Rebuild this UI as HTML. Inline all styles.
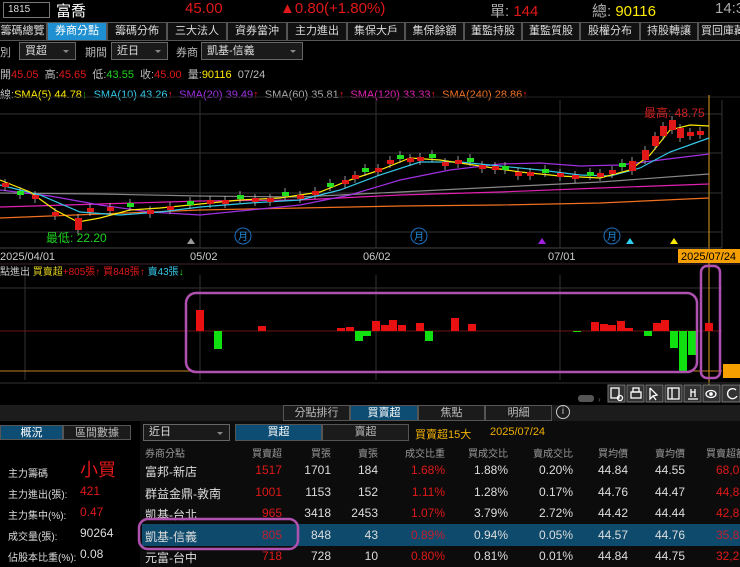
<!DOCTYPE html>
<html><head><meta charset="utf-8">
<style>
*{margin:0;padding:0;box-sizing:border-box}
body{width:740px;height:567px;overflow:hidden;background:#000;font-family:"Liberation Sans","Noto Sans CJK TC",sans-serif;color:#ddd;position:relative;font-size:11px}
.a{position:absolute;white-space:nowrap}
.tab{position:absolute;top:22px;height:19px;border:1px solid #555;background:#111;color:#ddd;font-size:11px;text-align:center;line-height:17px}
.tab.on{background:#1e8fd0;color:#fff}
.sel{position:absolute;height:18px;border:1px solid #666;background:#1a1a1a;color:#ddd;font-size:11px;line-height:16px;padding-left:5px}
.sel:after{content:"";position:absolute;right:6px;top:7px;border:3px solid transparent;border-top-color:#888}
.btab{position:absolute;height:16px;border:1px solid #555;background:#1b1b1b;color:#bbb;font-size:11px;text-align:center;line-height:14px}
.btab.on{background:#0e4d73;color:#fff}
.r{position:absolute;text-align:right;font-size:12px}
.red{color:#e01818}.wh{color:#ddd}
</style></head><body>
<!-- top bar -->
<div class="a" style="left:3px;top:2px;width:47px;height:16px;border:1px solid #777;font-size:10px;line-height:14px;padding-left:4px">1815</div>
<div class="a" style="left:56px;top:0;font-size:15px;color:#fff">富喬</div>
<div class="a" style="left:185px;top:0;font-size:15px;color:#e01818">45.00</div>
<div class="a" style="left:280px;top:0;font-size:15px;color:#e01818">▲0.80(+1.80%)</div>
<div class="a" style="left:490px;top:0;font-size:15px;color:#aaa">單: <span class="red">144</span></div>
<div class="a" style="left:592px;top:0;font-size:15px;color:#aaa">總: <span style="color:#ffea00">90116</span></div>
<div class="a" style="left:715px;top:0;font-size:15px;color:#aaa">14:3</div>
<!-- tabs -->
<div class="tab" style="left:-2px;width:49px">籌碼總覽</div>
<div class="tab on" style="left:47px;width:60px">券商分點</div>
<div class="tab" style="left:107px;width:60px">籌碼分佈</div>
<div class="tab" style="left:167px;width:60px">三大法人</div>
<div class="tab" style="left:227px;width:60px">資券當沖</div>
<div class="tab" style="left:287px;width:60px">主力進出</div>
<div class="tab" style="left:347px;width:58px">集保大戶</div>
<div class="tab" style="left:405px;width:59px">集保餘額</div>
<div class="tab" style="left:464px;width:58px">董監持股</div>
<div class="tab" style="left:522px;width:58px">董監質股</div>
<div class="tab" style="left:580px;width:60px">股權分布</div>
<div class="tab" style="left:640px;width:58px">持股轉讓</div>
<div class="tab" style="left:698px;width:50px">買回庫藏</div>
<!-- selectors -->
<div class="a" style="left:0;top:44px;color:#bbb">別</div>
<div class="sel" style="left:19px;top:42px;width:57px">買超</div>
<div class="a" style="left:85px;top:44px;color:#bbb">期間</div>
<div class="sel" style="left:111px;top:42px;width:57px">近日</div>
<div class="a" style="left:176px;top:44px;color:#bbb">券商</div>
<div class="sel" style="left:201px;top:42px;width:102px">凱基-信義</div>
<div class="a" style="left:0;top:66px;font-size:11px;color:#bbb">開<span class="red">45.05</span> &nbsp;高:<span class="red">45.65</span> &nbsp;低:<span style="color:#1ed41e">43.55</span> &nbsp;收:<span class="red">45.00</span> &nbsp;量:<span style="color:#ffea00">90116</span> &nbsp;07/24</div>
<div class="a" style="left:0;top:86px;font-size:11px;color:#bbb">線:<span style="color:#ffea00">SMA(5) 44.78</span><span style="color:#1ed41e">↓</span> &nbsp;<span style="color:#34c8e8">SMA(10) 43.26</span><span class="red">↑</span> &nbsp;<span style="color:#a030e0">SMA(20) 39.49</span><span class="red">↑</span> &nbsp;<span style="color:#aaa">SMA(60) 35.81</span><span class="red">↑</span> &nbsp;<span style="color:#e020b0">SMA(120) 33.33</span><span class="red">↑</span> &nbsp;<span style="color:#f07020">SMA(240) 28.86</span><span class="red">↑</span></div>
<svg class="a" style="left:0;top:0" width="740" height="410" id="ch">
<g stroke="#333" stroke-width="1">
<line x1="0" y1="114" x2="722" y2="114"/><line x1="0" y1="153" x2="722" y2="153"/><line x1="0" y1="193" x2="722" y2="193"/><line x1="0" y1="232" x2="722" y2="232"/>
<line x1="200" y1="100" x2="200" y2="248"/><line x1="376" y1="100" x2="376" y2="248"/><line x1="560" y1="100" x2="560" y2="248"/><line x1="722" y1="100" x2="722" y2="248"/>
<line x1="25" y1="275" x2="25" y2="380"/><line x1="200" y1="275" x2="200" y2="380"/><line x1="376" y1="275" x2="376" y2="380"/><line x1="560" y1="275" x2="560" y2="380"/>
<line x1="0" y1="288" x2="722" y2="288"/>
</g>
<line x1="0" y1="97" x2="740" y2="97" stroke="#222"/>
<line x1="0" y1="264" x2="740" y2="264" stroke="#402030"/>
<line x1="709" y1="95" x2="709" y2="385" stroke="#e0a020"/>
<g fill="none" stroke-width="1.2">
<polyline stroke="#f07020" points="0,218 100,214 200,210 300,208 400,206 500,205 600,203 709,198"/>
<polyline stroke="#e020b0" points="0,207 100,204 200,201 300,200 400,195 500,192 600,188 709,184"/>
<polyline stroke="#888" points="0,193 100,194 200,196 300,197 400,192 500,187 600,182 709,174"/>
<polyline stroke="#a030e0" points="0,190 50,196 100,205 150,212 200,215 250,210 300,205 350,195 400,180 450,170 500,164 540,163 580,166 620,165 660,160 709,154"/>
<polyline stroke="#34c8e8" points="0,185 40,195 80,212 120,215 160,212 200,207 250,203 300,200 340,190 380,175 420,162 460,162 500,166 540,170 580,175 610,176 640,168 670,152 709,138"/>
<polyline stroke="#ffea00" points="0,180 30,192 55,210 78,222 100,218 130,210 160,208 200,204 240,200 280,198 320,192 350,180 380,170 410,158 440,160 480,166 520,172 560,176 600,178 630,170 650,155 670,130 690,125 709,126"/>
</g>
<g id="cand"></g>
<text x="644" y="117" fill="#d02020" font-size="12">最高: 48.75</text>
<text x="46" y="242" fill="#1ed41e" font-size="12">最低: 22.20</text>
<g fill="none" stroke="#1e6fc0"><circle cx="243" cy="236" r="8"/><circle cx="419" cy="236" r="8"/><circle cx="612" cy="236" r="8"/></g>
<g fill="#1e8fe0" font-size="10"><text x="238" y="240">月</text><text x="414" y="240">月</text><text x="607" y="240">月</text></g>
<polygon points="187,244 191,238 195,244" fill="#999"/>
<polygon points="538,244 542,238 546,244" fill="#a020e0"/>
<polygon points="626,244 630,238 634,244" fill="#30d0f0"/>
<polygon points="670,244 674,238 678,244" fill="#ffea00"/>
<line x1="0" y1="248" x2="722" y2="248" stroke="#444"/>
<g fill="#ccc" font-size="11"><text x="0" y="260">2025/04/01</text><text x="190" y="260">05/02</text><text x="363" y="260">06/02</text><text x="548" y="260">07/01</text></g>
<rect x="678" y="249" width="62" height="14" fill="#f5a000"/>
<text x="681" y="260" fill="#000" font-size="11">2025/07/24</text>
<text x="0" y="275" font-size="10" fill="#ccc">點進出 <tspan fill="#e0d020">買賣超</tspan><tspan fill="#e01818">+805張↑ 買848張↑</tspan> <tspan fill="#34c8e8">賣43張</tspan><tspan fill="#1ed41e">↓</tspan></text>
<line x1="0" y1="331" x2="722" y2="331" stroke="#6a1515"/>
<line x1="0" y1="371" x2="190" y2="371" stroke="#c08020"/>
<line x1="690" y1="371" x2="722" y2="371" stroke="#c08020"/>
<g id="bars"></g>
<rect x="186" y="293" width="511" height="79" rx="10" fill="none" stroke="#b050b0" stroke-width="2.5"/>
<rect x="701" y="266" width="19" height="112" rx="6" fill="none" stroke="#b050b0" stroke-width="2.5"/>
<rect x="723" y="364" width="17" height="14" fill="#f5a000"/>
<line x1="0" y1="383" x2="740" y2="383" stroke="#333"/>
<rect x="578" y="395" width="16" height="7" rx="3" fill="#555"/>
<text x="598" y="402" fill="#666" font-size="8">›</text>
<g fill="#333" stroke="#777"><rect x="608" y="385" width="17" height="17"/><rect x="627" y="385" width="17" height="17"/><rect x="646" y="385" width="17" height="17"/><rect x="665" y="385" width="17" height="17"/><rect x="684" y="385" width="17" height="17"/><rect x="703" y="385" width="17" height="17"/><rect x="722" y="385" width="18" height="17"/></g>
<g stroke="#fff" fill="none" stroke-width="1.3">
<rect x="611" y="388" width="8" height="10"/><circle cx="620" cy="398" r="2.5"/>
<rect x="631" y="392" width="10" height="6"/><rect x="633" y="388" width="6" height="4"/>
<path d="M650 388 L650 399 L653 396 L656 400 M650 388 L657 395 L653 396"/>
<rect x="668" y="388" width="11" height="11"/><line x1="672" y1="388" x2="672" y2="399"/>
<path d="M688 399 H698 M691 389 V397 M695 389 V397 M691 392 H695"/>
<ellipse cx="711" cy="394" rx="5" ry="3.5"/><circle cx="711" cy="394" r="1.2" fill="#fff"/>
<path d="M736 390 A5 5 0 1 0 737 396"/>
</g>
</svg>
<!-- bottom panel -->
<div class="a" style="left:0;top:405px;width:740px;height:162px;background:#0c0c0c"></div>
<div class="a" style="left:0;top:405px;width:740px;height:16px;background:#1c1c1c"></div>
<div class="btab" style="left:283px;top:405px;width:67px">分點排行</div>
<div class="btab on" style="left:350px;top:405px;width:68px">買賣超</div>
<div class="btab" style="left:418px;top:405px;width:67px">焦點</div>
<div class="btab" style="left:485px;top:405px;width:67px">明細</div>
<div class="a" style="left:556px;top:405px;width:14px;height:14px;border:1px solid #ccc;border-radius:50%;font-size:10px;text-align:center;line-height:12px;color:#ccc">i</div>
<div class="a" style="left:0;top:421px;width:140px;height:146px;background:#000"></div>
<div class="btab on" style="left:0;top:425px;width:63px;height:15px">概況</div>
<div class="btab" style="left:63px;top:425px;width:68px;height:15px">區間數據</div>
<div class="sel" style="left:143px;top:424px;width:87px;height:17px;line-height:15px">近日</div>
<div class="btab on" style="left:235px;top:424px;width:87px;height:17px">買超</div>
<div class="btab" style="left:322px;top:424px;width:87px;height:17px">賣超</div>
<div class="a" style="left:415px;top:426px;color:#f0b000">買賣超15大</div>
<div class="a" style="left:490px;top:426px;color:#f0b000">2025/07/24</div>
<div class="a" style="left:8px;top:465px;font-size:10px">主力籌碼</div>
<div class="a" style="left:80px;top:456px;font-size:18px;color:#e01818">小買</div>
<div class="a" style="left:8px;top:486px;font-size:10px">主力進出(張):</div><div class="a red" style="left:80px;top:484px;font-size:12px">421</div>
<div class="a" style="left:8px;top:507px;font-size:10px">主力集中(%):</div><div class="a red" style="left:80px;top:505px;font-size:12px">0.47</div>
<div class="a" style="left:8px;top:528px;font-size:10px">成交量(張):</div><div class="a" style="left:80px;top:526px;font-size:12px">90264</div>
<div class="a" style="left:8px;top:549px;font-size:10px">佔股本比重(%):</div><div class="a" style="left:80px;top:547px;font-size:12px">0.08</div>
<div class="a" style="left:142px;top:524px;width:598px;height:22px;background:#0d4a6c"></div>
<div id="tbl"></div>
<svg class="a" style="left:0;top:0" width="740" height="567"><rect x="139" y="519" width="159" height="30" rx="9" fill="none" stroke="#b050b0" stroke-width="2.5"/></svg>
<script>
var ns="http://www.w3.org/2000/svg";
function el(p,t,a){var e=document.createElementNS(ns,t);for(var k in a)e.setAttribute(k,a[k]);p.appendChild(e);return e;}
var pts=[[5,183],[20,195],[35,195],[55,212],[78,230],[90,208],[110,207],[130,207],[150,210],[170,206],[190,205],[210,200],[225,200],[240,199],[255,198],[270,198],[285,196],[300,195],[315,191],[330,187],[345,180],[355,175],[365,172],[378,168],[390,160],[400,159],[410,158],[420,157],[432,158],[445,162],[458,160],[470,162],[482,165],[495,166],[505,170],[518,172],[530,172],[545,173],[560,173],[575,175],[590,176],[600,173],[612,170],[622,167],[632,163],[645,152],[655,138],[663,128],[672,122],[680,130],[690,132],[700,131]];
var g=document.getElementById("cand");
pts.forEach(function(p,i){var up=(i%3!=1);var c=up?"#e01818":"#20e020";var o=up?p[1]+4:p[1]-4,cl=p[1];var t=Math.min(o,cl),h=Math.max(3,Math.abs(o-cl));
if(i>=44&&i<=49){t=p[1]-2;h=10;c="#e01818"}if(i==4){t=218;h=12;c="#e01818"}
el(g,"line",{x1:p[0],x2:p[0],y1:t-4,y2:t+h+4,stroke:"#bbb","stroke-width":0.8});
el(g,"rect",{x:p[0]-3,y:t,width:7,height:h,fill:c});});
var b=[[196,21],[214,-18],[258,5],[337,3],[346,4],[355,-10],[363,-5],[372,10],[381,6],[389,11],[398,6],[416,8],[425,-10],[451,13],[468,7],[573,-1],[591,9],[600,7],[608,6],[617,10],[625,3],[644,-5],[653,8],[661,11],[670,-17],[679,-41],[688,-24],[705,8]];
var bg=document.getElementById("bars");
b.forEach(function(v){el(bg,"rect",{x:v[0],y:v[1]>0?331-v[1]:331,width:8,height:Math.abs(v[1]),fill:v[1]>0?"#e81010":"#10e010"});});
var cols=[[282,"買賣超"],[331,"買張"],[378,"賣張"],[445,"成交比重"],[508,"買成交比"],[573,"賣成交比"],[628,"買均價"],[685,"賣均價"],[746,"買賣超額"]];
var rows=[["富邦-新店","1517","1701","184","1.68%","1.88%","0.20%","44.84","44.55","68,07"],["群益金鼎-敦南","1001","1153","152","1.11%","1.28%","0.17%","44.76","44.47","44,84"],["凱基-台北","965","3418","2453","1.07%","3.79%","2.72%","44.42","44.44","42,83"],["凱基-信義","805","848","43","0.89%","0.94%","0.05%","44.57","44.76","35,87"],["元富-台中","718","728","10","0.80%","0.81%","0.01%","44.84","44.75","32,20"]];
var h="<div class='a' style='left:145px;top:445px;font-size:10px;color:#999'>券商分點</div>";
cols.forEach(function(c){h+="<div class='r' style='left:"+(c[0]-70)+"px;width:70px;top:445px;font-size:10px;color:#999'>"+c[1]+"</div>";});
rows.forEach(function(r,i){var y=463+i*21.5;h+="<div class='a' style='left:145px;top:"+y+"px;font-size:12px;color:#ddd'>"+r[0]+"</div>";
for(var j=1;j<10;j++){var red=(j==1||j==4||j==9);h+="<div class='r' style='left:"+(cols[j-1][0]-70)+"px;width:70px;top:"+y+"px;color:"+(red?(i==3?"#c02030":"#e01818"):"#ddd")+"'>"+r[j]+"</div>";}});
document.getElementById("tbl").innerHTML=h;
</script>
</body></html>
